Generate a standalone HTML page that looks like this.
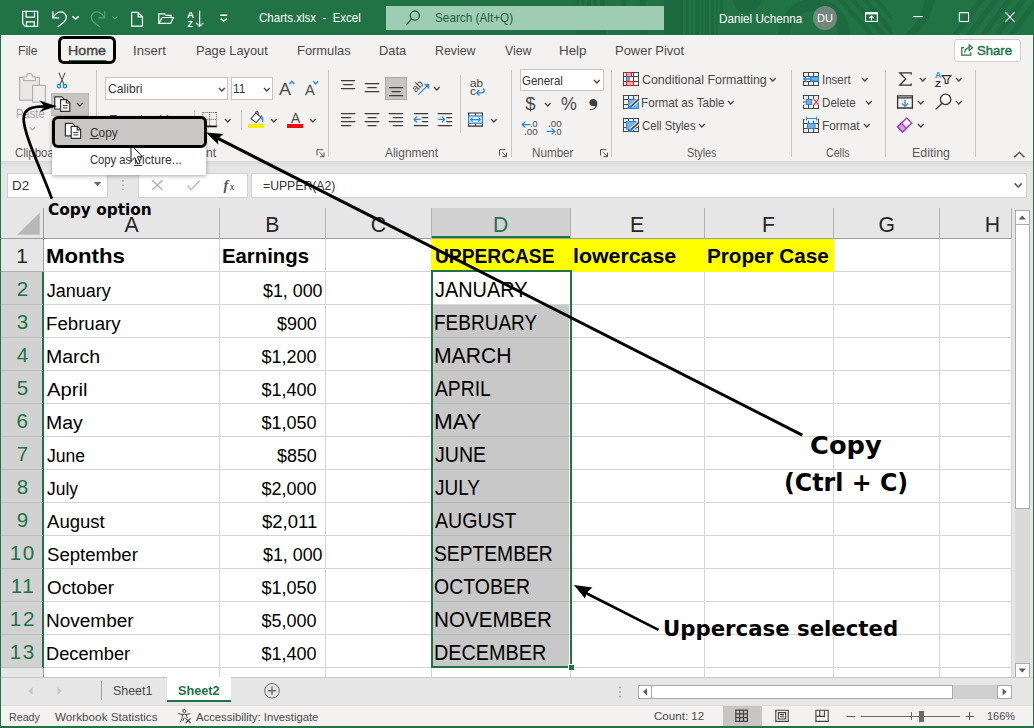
<!DOCTYPE html>
<html lang="en">
<head>
<meta charset="utf-8">
<title>Charts.xlsx - Excel</title>
<style>
html,body{margin:0;padding:0;}
body{width:1034px;height:728px;overflow:hidden;background:#f3f2f1;font-family:"Liberation Sans",sans-serif;}
#app{position:relative;width:1034px;height:728px;overflow:hidden;background:#f3f2f1;}
#app div,#app svg,#app span.t{position:absolute;box-sizing:border-box;}
#app svg{overflow:visible;display:block;}
span.t{white-space:pre;line-height:1;transform-origin:0 0;}
.u{text-decoration:underline;}
</style>
</head>
<body>
<div id="app">
<div id="titlebar" style="left:0px;top:0px;width:1034px;height:34.6px;background:#217346;">
  <svg style="left:0px;top:0px" width="1034" height="34.6" viewBox="0 0 1034 34.6"><g fill="#000" opacity=".075">
<rect x="664" y="0" width="19" height="34.6"/>
<path d="M686 0h3v34.6h-3z M691 0h2v34.6h-2z M695 0h4v34.6h-4z M701 0h2v34.6h-2z M705 0h4v34.6h-4z M711 0h3v34.6h-3z M716 0h2v34.6h-2z M720 0h3v16h-3z"/>
<path d="M576 0h3v6h-3z M582 0h2v6h-2z M587 0h4v6h-4z M594 0h3v6h-3z M600 0h5v6h-5z M622 0h4v6h-4z M640 0h6v6h-6z M576 30h30v4.6h-30z M640 30h8v4.6h-8z"/>
<path d="M733 0 A14 13 0 0 0 761 0 Z"/>
<path d="M778 34.6 A36 36 0 0 1 850 34.6 h-12 A24 24 0 0 0 790 34.6 Z"/>
<path d="M838 0 l6 0 l30 34.6 l-6 0 Z M850 0 l6 0 l30 34.6 l-6 0 Z M862 0 l6 0 l24 28 l0 6.6 l-1 0 Z M874 0 l5 0 l13 15 l0 6 Z"/>
<path d="M905 34.6 A60 60 0 0 0 925 0 h10 A70 70 0 0 1 916 34.6 Z"/>
<path d="M952 34.6 l26 -34.6 l7 0 l-26 34.6 Z M966 34.6 l26 -34.6 l7 0 l-26 34.6 Z M980 34.6 l26 -34.6 l7 0 l-26 34.6 Z M994 34.6 l26 -34.6 l7 0 l-26 34.6 Z M1008 34.6 l26 -34.6 l0 9 l-19 25.6 Z"/>
</g></svg>
  <div class="search" style="left:386px;top:6px;width:278px;height:24px;background:#9ecdb4;"></div>
  <span class="t" style="left:259.42px;top:12.1px;font-size:12.6px;color:#ffffff;transform:scaleX(0.915);">Charts.xlsx  -  Excel</span>
  <span class="t" style="left:435.47px;top:12.1px;font-size:12.6px;color:#1f5f3c;transform:scaleX(0.934);">Search (Alt+Q)</span>
  <span class="t" style="left:718.56px;top:12.6px;font-size:12.6px;color:#ffffff;transform:scaleX(0.929);">Daniel Uchenna</span>
  <div style="left:813px;top:6px;width:24px;height:24px;background:#73867d;border-radius:50%;"></div>
  <span class="t" style="left:816.92px;top:13.2px;font-size:10.5px;color:#ffffff;transform:scaleX(1.052);">DU</span>
  <svg style="left:0px;top:0px" width="1034" height="34.6" viewBox="0 0 1034 34.6"><g transform="translate(0 0)">
<g fill="none" stroke="#fff" stroke-width="1.2" stroke-linejoin="miter">
<path d="M22.6 11.3 H37.6 V26.4 H25.2 L22.6 23.8 Z"/>
<path d="M26 11.3 V17.2 H34.4 V11.3"/>
<path d="M26.4 26.4 V21.8 H34.2 V26.4"/>
<path d="M52.8 11.3 V17.8 H59.2"/>
<path d="M53 17.6 C55.4 12.6 60.6 10.6 64 13 C67 15.2 66.8 19.4 64.2 21.8 L57.6 27"/>
<path d="M72.4 16.4 L75.5 19 L78.6 16.4" stroke-width="1.6"/>
<path d="M131.6 12.4 H138 L142.4 16.8 V26.2 H131.6 Z"/>
<path d="M138 12.4 V16.8 H142.4"/>
<path d="M158.7 23.3 V13.8 H164.6 L166 15.3 H171 V17.4"/>
<path d="M158.7 23.4 L162.2 17.5 H173.4 L170.5 23.4 Z"/>
<path d="M199.6 10.8 V26.4 M196 22.8 L199.6 26.5 L203.2 22.8"/>
<path d="M220 15.3 H227.2 M220.6 18.6 L223.6 21.2 L226.6 18.6" stroke-width="1.4"/>
</g>
<g fill="none" stroke="#5f9c7c" stroke-width="1.2">
<path d="M104.6 11.3 V17.8 H98.2"/>
<path d="M104.4 17.6 C102 12.6 96.8 10.6 93.4 13 C90.4 15.2 90.6 19.4 93.2 21.8 L99.8 27"/>
<path d="M112 16.4 L114.8 18.8 L117.6 16.4"/>
</g>
</g></svg>
  <span class="t" style="left:187.05px;top:10.5px;font-size:8.6px;color:#fff;font-weight:bold;transform:scaleX(1.154);">A</span>
  <span class="t" style="left:187.38px;top:19.7px;font-size:8.6px;color:#fff;font-weight:bold;">Z</span>
  <svg style="left:0px;top:0px" width="1034" height="34.6" viewBox="0 0 1034 34.6"><g transform="translate(0 0)"><g fill="none" stroke="#1f5f3c" stroke-width="1.3"><circle cx="414.8" cy="15.6" r="4.6"/><path d="M411.6 19 L406.4 24.6"/></g></g></svg>
  <svg style="left:0px;top:0px" width="1034" height="34.6" viewBox="0 0 1034 34.6"><g transform="translate(0 0)"><g fill="none" stroke="#fff" stroke-width="1.1">
<rect x="865.6" y="12.6" width="11.8" height="8.8"/><path d="M865.6 13.4 H877.4" stroke-width="2"/>
<path d="M871.5 20.2 V16.2 M869.2 18.2 L871.5 16 L873.8 18.2"/>
<path d="M913.2 16.6 H923"/>
<rect x="959.4" y="12.7" width="9.2" height="8.8"/>
<path d="M1005.3 12.2 L1014.8 21.8 M1014.8 12.2 L1005.3 21.8"/>
</g></g></svg>
</div>
<div id="tabs" style="left:1px;top:35px;width:1032px;height:31px;background:#f3f2f1;">
  <span class="t" style="left:16.63px;top:9.9px;font-size:12.6px;color:#4a4a4a;transform:scaleX(0.959);">File</span>
  <span class="t" style="left:67.47px;top:8.9px;font-size:13.3px;color:#4a4a4a;transform:scaleX(1.067);-webkit-text-stroke:0.4px #444;">Home</span>
  <span class="t" style="left:131.82px;top:9.9px;font-size:12.6px;color:#4a4a4a;transform:scaleX(1.044);">Insert</span>
  <span class="t" style="left:195.38px;top:9.9px;font-size:12.6px;color:#4a4a4a;transform:scaleX(1.014);">Page Layout</span>
  <span class="t" style="left:296.27px;top:9.9px;font-size:12.6px;color:#4a4a4a;transform:scaleX(1.024);">Formulas</span>
  <span class="t" style="left:378.17px;top:9.9px;font-size:12.6px;color:#4a4a4a;transform:scaleX(1.022);">Data</span>
  <span class="t" style="left:434.01px;top:9.9px;font-size:12.6px;color:#4a4a4a;transform:scaleX(0.980);">Review</span>
  <span class="t" style="left:503.5px;top:9.9px;font-size:12.6px;color:#4a4a4a;transform:scaleX(0.978);">View</span>
  <span class="t" style="left:557.53px;top:9.9px;font-size:12.6px;color:#4a4a4a;transform:scaleX(1.062);">Help</span>
  <span class="t" style="left:614.16px;top:9.9px;font-size:12.6px;color:#4a4a4a;transform:scaleX(1.028);">Power Pivot</span>
  <div style="left:68.3px;top:24.6px;width:37.2px;height:2px;background:#217346;"></div>
  <div style="left:952.5px;top:3.7px;width:67.5px;height:23px;background:#fff;border:1px solid #d2d0ce;border-radius:3px;"></div>
  <span class="t" style="left:975.61px;top:8.5px;font-size:13px;color:#217346;transform:scaleX(1.008);-webkit-text-stroke:0.45px #217346;">Share</span>
  <svg style="left:0px;top:0px" width="1032" height="31" viewBox="0 0 1032 31"><g transform="translate(-1 -35)"><g fill="none" stroke="#217346" stroke-width="1.2">
<path d="M964 47.6 H961.8 V55.2 H970.8 V52.2"/>
<path d="M964.6 52.6 C965 49.6 966.8 47.8 969.4 47.7"/>
<path d="M969.2 45 L972.6 47.8 L969.2 50.6 Z"/>
</g></g></svg>
</div>
<div id="ribbon" style="left:1px;top:66px;width:1032px;height:95px;background:#f3f2f1;">
  <div style="left:94.9px;top:3.6px;width:1px;height:87px;background:#c8c6c4;"></div>
  <div style="left:327.2px;top:3.6px;width:1px;height:87px;background:#c8c6c4;"></div>
  <div style="left:509.7px;top:3.6px;width:1px;height:87px;background:#c8c6c4;"></div>
  <div style="left:610.1px;top:3.6px;width:1px;height:87px;background:#c8c6c4;"></div>
  <div style="left:789.8px;top:3.6px;width:1px;height:87px;background:#c8c6c4;"></div>
  <div style="left:884.1px;top:3.6px;width:1px;height:87px;background:#c8c6c4;"></div>
  <div style="left:974px;top:3.6px;width:1px;height:87px;background:#c8c6c4;"></div>
  <div style="left:459.2px;top:9px;width:1px;height:58px;background:#c8c6c4;"></div>
  <div style="left:193px;top:44px;width:1px;height:20px;background:#c8c6c4;"></div>
  <div style="left:239.5px;top:44px;width:1px;height:20px;background:#c8c6c4;"></div>
  <span class="t" style="left:15.1px;top:41.9px;font-size:12.6px;color:#a6a6a6;transform:scaleX(0.890);">Paste</span>
  <span class="t" style="left:13.73px;top:80.8px;font-size:12px;color:#5a5a5a;transform:scaleX(0.953);">Clipboard</span>
  <div style="left:50px;top:27px;width:38px;height:23px;background:#c8c6c4;border:1px solid #b9b7b5;"></div>
  <div style="left:104px;top:11px;width:123px;height:22.5px;background:#fff;border:1px solid #c8c6c4;"></div>
  <div style="left:229.5px;top:11px;width:42px;height:22.5px;background:#fff;border:1px solid #c8c6c4;"></div>
  <span class="t" style="left:106.89px;top:17px;font-size:12.6px;color:#333;transform:scaleX(0.965);">Calibri</span>
  <span class="t" style="left:232.01px;top:17px;font-size:12.6px;color:#333;transform:scaleX(0.937);">11</span>
  <span class="t" style="left:278px;top:15px;font-size:17px;color:#4a4a4a;transform:scaleX(1.061);">A</span>
  <span class="t" style="left:303.7px;top:17px;font-size:14px;color:#4a4a4a;transform:scaleX(1.053);">A</span>
  <span class="t" style="left:108.05px;top:47px;font-size:14px;color:#4a4a4a;font-weight:bold;transform:scaleX(1.045);">B</span>
  <span class="t" style="left:137.51px;top:47px;font-size:14px;color:#4a4a4a;font-style:italic;">I</span>
  <span class="t" style="left:157.95px;top:47px;font-size:14px;color:#4a4a4a;text-decoration:underline;">U</span>
  <span class="t" style="left:190.53px;top:80.8px;font-size:12px;color:#5a5a5a;transform:scaleX(1.007);">Font</span>
  <span class="t" style="left:289.5px;top:44.5px;font-size:14.6px;color:#4a4a4a;transform:scaleX(0.948);">A</span>
  <div style="left:247px;top:57.9px;width:16px;height:4.1px;background:#ffee00;"></div>
  <div style="left:286px;top:57.9px;width:16px;height:4.1px;background:#f00a0a;"></div>
  <div style="left:384.3px;top:11px;width:22px;height:23px;background:#c8c6c4;border:1px solid #a9a7a5;"></div>
  <span class="t" style="left:384px;top:80.8px;font-size:12px;color:#5a5a5a;transform:scaleX(0.994);">Alignment</span>
  <div style="left:518.5px;top:3.3px;width:84.5px;height:22.2px;background:#fff;border:1px solid #c8c6c4;"></div>
  <span class="t" style="left:520.83px;top:8.7px;font-size:12.6px;color:#333;transform:scaleX(0.912);">General</span>
  <span class="t" style="left:524.32px;top:29.2px;font-size:18.5px;color:#4a4a4a;">$</span>
  <span class="t" style="left:559.98px;top:30.4px;font-size:17.6px;color:#4a4a4a;transform:scaleX(1.012);">%</span>
  <span class="t" style="left:587.49px;top:15.2px;font-size:27px;color:#3f3f3f;font-family:'DejaVu Sans', 'Liberation Sans', sans-serif;">❟</span>
  <span class="t" style="left:530.57px;top:80.8px;font-size:12px;color:#5a5a5a;transform:scaleX(0.972);">Number</span>
  <span class="t" style="left:640.78px;top:8.2px;font-size:12.6px;color:#4a4a4a;transform:scaleX(0.984);">Conditional Formatting</span>
  <span class="t" style="left:640.46px;top:30.8px;font-size:12.6px;color:#4a4a4a;transform:scaleX(0.928);">Format as Table</span>
  <span class="t" style="left:640.83px;top:53.7px;font-size:12.6px;color:#4a4a4a;transform:scaleX(0.901);">Cell Styles</span>
  <span class="t" style="left:685.81px;top:80.8px;font-size:12px;color:#5a5a5a;transform:scaleX(0.904);">Styles</span>
  <span class="t" style="left:820.87px;top:8px;font-size:12.6px;color:#4a4a4a;transform:scaleX(0.912);">Insert</span>
  <span class="t" style="left:820.97px;top:30.6px;font-size:12.6px;color:#4a4a4a;transform:scaleX(0.923);">Delete</span>
  <span class="t" style="left:820.95px;top:53.7px;font-size:12.6px;color:#4a4a4a;transform:scaleX(0.944);">Format</span>
  <span class="t" style="left:825.17px;top:80.8px;font-size:12px;color:#5a5a5a;transform:scaleX(0.888);">Cells</span>
  <span class="t" style="left:910.61px;top:80.8px;font-size:12px;color:#5a5a5a;transform:scaleX(1.035);">Editing</span>
  <svg style="left:0px;top:0px" width="1032" height="95" viewBox="0 0 1032 95"><g transform="translate(-1 -66)">
<g stroke="#b4b2b0" stroke-width="1.2" fill="#e9e8e7">
<path d="M19.6 77.4 H39.4 V100.2 H19.6 Z"/>
<path d="M23.8 80.6 V77 H26.6 C26.8 74.2 28.2 73.4 29.6 73.4 C31 73.4 32.4 74.2 32.6 77 H35.4 V80.6 Z" fill="#f3f2f1"/>
<path d="M32.6 85.4 H45.4 V102.2 H32.6 Z" fill="#efeeed"/>
</g>
<path d="M29.8 127.3 L32.4 129.8 L35 127.3" fill="none" stroke="#b4b2b0" stroke-width="1.2"/>
<g fill="none" stroke="#555" stroke-width="1.1"><path d="M58.9 72.6 L64.2 85 M65.1 72.6 L59.8 85"/></g>
<g fill="none" stroke="#1e8ad6" stroke-width="1.3"><circle cx="59" cy="86.2" r="1.7"/><circle cx="65" cy="86.2" r="1.7"/></g>
<g stroke="#333" stroke-width="1.2" fill="#fff">
<path d="M54.8 96.8 H61.8 L64 99 V109 H54.8 Z"/>
<path d="M60.6 99.6 H66.6 L69.8 102.8 V111.4 H60.6 Z"/>
<path d="M66.4 99.8 V103 H69.6" fill="none"/>
<path d="M62.8 105.6 H67.6 M62.8 108 H67.6" fill="none" stroke-width="1"/>
</g></g></svg>
  <svg style="left:74.8px;top:36.2px" width="7.7" height="5" viewBox="0 0 7.7 5"><path d="M1 1 L3.85 4 L6.7 1" fill="none" stroke="#444444" stroke-width="1.3"/></svg>
  <svg style="left:216.8px;top:21px" width="7.7" height="5" viewBox="0 0 7.7 5"><path d="M1 1 L3.85 4 L6.7 1" fill="none" stroke="#444444" stroke-width="1.3"/></svg>
  <svg style="left:261.6px;top:21px" width="7.7" height="5" viewBox="0 0 7.7 5"><path d="M1 1 L3.85 4 L6.7 1" fill="none" stroke="#444444" stroke-width="1.3"/></svg>
  <svg style="left:0px;top:0px" width="1032" height="95" viewBox="0 0 1032 95"><g transform="translate(-1 -66)"><g fill="none" stroke="#2b88d8" stroke-width="1.4"><path d="M289.4 84 L291.8 81.3 L294.2 84"/><path d="M313.3 81.3 L315.7 84 L318.1 81.3"/></g></g></svg>
  <svg style="left:0px;top:0px" width="1032" height="95" viewBox="0 0 1032 95"><g transform="translate(-1 -66)"><g fill="none" stroke="#555" stroke-width="1" stroke-dasharray="1 1.05">
<path d="M202.6 112.5 H216.6 M202.6 119.4 H216.6 M202.8 112.2 V126 M209.6 112.2 V126 M216.4 112.2 V126"/></g>
<path d="M202 126.4 H217" stroke="#111" stroke-width="1.7"/></g></svg>
  <svg style="left:222.8px;top:52px" width="7.7" height="5" viewBox="0 0 7.7 5"><path d="M1 1 L3.85 4 L6.7 1" fill="none" stroke="#444444" stroke-width="1.3"/></svg>
  <svg style="left:0px;top:0px" width="1032" height="95" viewBox="0 0 1032 95"><g transform="translate(-1 -66)"><g fill="none" stroke="#444" stroke-width="1.1">
<path d="M255.8 113 L251 118.6 L256.2 122.6 L261 117 Z" fill="#fbfbfb"/>
<path d="M255.8 113 C255.4 111.4 257.6 110.6 258.2 112.6 L258.4 115.2"/>
</g>
<path d="M261.4 115.4 C263.2 117.4 263.4 119.6 262.6 121.8 C261.8 120 261.6 118 261.4 115.4 Z" fill="#2b88d8" stroke="#2b88d8" stroke-width=".8"/></g></svg>
  <svg style="left:268.5px;top:52px" width="7.7" height="5" viewBox="0 0 7.7 5"><path d="M1 1 L3.85 4 L6.7 1" fill="none" stroke="#444444" stroke-width="1.3"/></svg>
  <svg style="left:307.7px;top:52px" width="7.7" height="5" viewBox="0 0 7.7 5"><path d="M1 1 L3.85 4 L6.7 1" fill="none" stroke="#444444" stroke-width="1.3"/></svg>
  <svg style="left:0px;top:0px" width="1032" height="95" viewBox="0 0 1032 95"><g transform="translate(-1 -66)"><g fill="none" stroke="#555" stroke-width="1"><path d="M317 155.6 V149.7 H322.9"/><path d="M319.7 152.4 L323.9 156.6 M324 152.6 V156.7 H319.9"/></g></g></svg>
  <svg style="left:0px;top:0px" width="1032" height="95" viewBox="0 0 1032 95"><g transform="translate(-1 -66)"><g fill="none" stroke="#555" stroke-width="1"><path d="M499.5 155.6 V149.7 H505.4"/><path d="M502.2 152.4 L506.4 156.6 M506.5 152.6 V156.7 H502.4"/></g></g></svg>
  <svg style="left:0px;top:0px" width="1032" height="95" viewBox="0 0 1032 95"><g transform="translate(-1 -66)"><g fill="none" stroke="#555" stroke-width="1"><path d="M600.5 155.6 V149.7 H606.4"/><path d="M603.2 152.4 L607.4 156.6 M607.5 152.6 V156.7 H603.4"/></g></g></svg>
  <svg style="left:0px;top:0px" width="1032" height="95" viewBox="0 0 1032 95"><g transform="translate(-1 -66)"><path d="M341 80.5 H355 M343.2 84.5 H352.8 M341 88.5 H355" fill="none" stroke="#3b3b3b" stroke-width="1.25"/></g></svg>
  <svg style="left:0px;top:0px" width="1032" height="95" viewBox="0 0 1032 95"><g transform="translate(-1 -66)"><path d="M365 83.5 H379 M367.3 87.5 H376.8 M365 91.5 H379" fill="none" stroke="#3b3b3b" stroke-width="1.25"/></g></svg>
  <svg style="left:0px;top:0px" width="1032" height="95" viewBox="0 0 1032 95"><g transform="translate(-1 -66)"><path d="M389 87.5 H403.2 M391.5 91.5 H400.8 M389 95.5 H403.2" fill="none" stroke="#3b3b3b" stroke-width="1.25"/></g></svg>
  <svg style="left:0px;top:0px" width="1032" height="95" viewBox="0 0 1032 95"><g transform="translate(-1 -66)"><path d="M341 113.5 H355 M341 117.5 H350.8 M341 121.5 H355 M341 125.5 H350.8" fill="none" stroke="#3b3b3b" stroke-width="1.25"/></g></svg>
  <svg style="left:0px;top:0px" width="1032" height="95" viewBox="0 0 1032 95"><g transform="translate(-1 -66)"><path d="M365 113.5 H379 M367.5 117.5 H376.5 M365 121.5 H379 M367.5 125.5 H376.5" fill="none" stroke="#3b3b3b" stroke-width="1.25"/></g></svg>
  <svg style="left:0px;top:0px" width="1032" height="95" viewBox="0 0 1032 95"><g transform="translate(-1 -66)"><path d="M389 113.5 H403.2 M393.2 117.5 H403.2 M389 121.5 H403.2 M393.2 125.5 H403.2" fill="none" stroke="#3b3b3b" stroke-width="1.25"/></g></svg>
  <svg style="left:0px;top:0px" width="1032" height="95" viewBox="0 0 1032 95"><g transform="translate(-1 -66)"><path d="M413.8 113.5 H428 M422.2 117.5 H428 M422.2 121.5 H428 M413.8 125.5 H428" fill="none" stroke="#3b3b3b" stroke-width="1.25"/></g></svg>
  <svg style="left:0px;top:0px" width="1032" height="95" viewBox="0 0 1032 95"><g transform="translate(-1 -66)"><path d="M438 113.5 H452.2 M446.4 117.5 H452.2 M446.4 121.5 H452.2 M438 125.5 H452.2" fill="none" stroke="#3b3b3b" stroke-width="1.25"/></g></svg>
  <svg style="left:0px;top:0px" width="1032" height="95" viewBox="0 0 1032 95"><g transform="translate(-1 -66)"><g fill="none" stroke="#2b88d8" stroke-width="1.3">
<path d="M420.6 119.4 H414.4 M417 116.6 L414.2 119.4 L417 122.2"/>
<path d="M438.2 119.4 H444.4 M441.8 116.6 L444.6 119.4 L441.8 122.2"/>
<path d="M418.4 94.6 L428.6 84.6"/><path d="M424.6 84.3 H428.9 V88.4 Z" fill="#2b88d8" stroke-width=".8"/>
</g></g></svg>
  <span class="t" style="left:-6.77px;top:-71.66px;font-size:10.4px;color:#444444;transform:rotate(-45deg);transform-origin:0 0;left:408.8px;top:20.8px;">ab</span>
  <svg style="left:431.7px;top:20px" width="7.7" height="5" viewBox="0 0 7.7 5"><path d="M1 1 L3.85 4 L6.7 1" fill="none" stroke="#444444" stroke-width="1.3"/></svg>
  <span class="t" style="left:468.93px;top:12.3px;font-size:10.5px;color:#444444;transform:scaleX(1.110);">ab</span>
  <span class="t" style="left:468.92px;top:19.8px;font-size:10.5px;color:#444444;transform:scaleX(1.138);">c</span>
  <svg style="left:0px;top:0px" width="1032" height="95" viewBox="0 0 1032 95"><g transform="translate(-1 -66)"><g fill="none" stroke="#2b88d8" stroke-width="1.3"><path d="M483 88.6 C485.2 90.2 484.4 92.8 481.6 92.8 H476.8 M479.4 90.2 L476.6 92.8 L479.4 95.4"/></g></g></svg>
  <svg style="left:0px;top:0px" width="1032" height="95" viewBox="0 0 1032 95"><g transform="translate(-1 -66)"><g fill="none" stroke="#333" stroke-width="1.2">
<path d="M468.6 116 V113 H482.4 V116 M468.6 123.2 V126.2 H482.4 V123.2 M475.5 113 V116 M475.5 123.2 V126.2"/></g>
<rect x="468.6" y="116" width="13.8" height="7.2" fill="#e1effa" stroke="#2b88d8" stroke-width="1.2"/>
<path d="M470.6 119.6 H480.4 M472.6 117.6 L470.6 119.6 L472.6 121.6 M478.4 117.6 L480.4 119.6 L478.4 121.6" fill="none" stroke="#2b88d8" stroke-width="1.1"/></g></svg>
  <svg style="left:488.5px;top:51.8px" width="7.7" height="5" viewBox="0 0 7.7 5"><path d="M1 1 L3.85 4 L6.7 1" fill="none" stroke="#444444" stroke-width="1.3"/></svg>
  <svg style="left:592.4px;top:12.8px" width="7.7" height="5" viewBox="0 0 7.7 5"><path d="M1 1 L3.85 4 L6.7 1" fill="none" stroke="#444444" stroke-width="1.3"/></svg>
  <svg style="left:542.8px;top:35.7px" width="7.7" height="5" viewBox="0 0 7.7 5"><path d="M1 1 L3.85 4 L6.7 1" fill="none" stroke="#444444" stroke-width="1.3"/></svg>
  <svg style="left:0px;top:0px" width="1032" height="95" viewBox="0 0 1032 95"><g transform="translate(-1 -66)"><g fill="none" stroke="#2b88d8" stroke-width="1.3">
<path d="M530.4 124.6 H522.4 M525.4 121.6 L522.2 124.6 L525.4 127.6"/>
<path d="M546.6 131.4 H554.6 M551.6 128.4 L554.8 131.4 L551.6 134.4"/>
</g></g></svg>
  <span class="t" style="left:528.79px;top:53.2px;font-size:9.5px;color:#444444;transform:scaleX(0.949);">.0</span>
  <span class="t" style="left:522.72px;top:60.8px;font-size:9.5px;color:#444444;transform:scaleX(1.032);">.00</span>
  <span class="t" style="left:546.72px;top:53.2px;font-size:9.5px;color:#444444;transform:scaleX(1.032);">.00</span>
  <span class="t" style="left:552.79px;top:60.8px;font-size:9.5px;color:#444444;transform:scaleX(0.949);">.0</span>
  <svg style="left:0px;top:0px" width="1032" height="95" viewBox="0 0 1032 95"><g transform="translate(-1 -66)"><path d="M623.5 72 V86 M628.5 72 V86 M633.5 72 V86 M638.5 72 V86 M623 72.5 H639 M623 76.5 H639 M623 81.5 H639 M623 85.5 H639" fill="none" stroke="#454545" stroke-width="1"/><rect x="626.5" y="72.5" width="5" height="4" fill="#f7a6ae" stroke="#e3202c" stroke-width="1"/><rect x="626.5" y="77" width="2.6" height="4" fill="#6fb1ea" stroke="#2b88d8" stroke-width="1"/><rect x="626.5" y="81.5" width="7" height="4" fill="#f7a6ae" stroke="#e3202c" stroke-width="1"/></g></svg>
  <svg style="left:0px;top:0px" width="1032" height="95" viewBox="0 0 1032 95"><g transform="translate(-1 -66)"><path d="M623.5 95 V109 M628.5 95 V109 M633.5 95 V109 M638.5 95 V109 M623 95.5 H639 M623 99.5 H639 M623 104.5 H639 M623 108.5 H639" fill="none" stroke="#454545" stroke-width="1"/><rect x="628.5" y="99.5" width="10" height="9" fill="#6fb1ea" stroke="#2b88d8" stroke-width="1"/><path d="M638.8 99.4 l-8.6 7.6" stroke="#f3f2f1" stroke-width="3.6"/><path d="M639 99.2 l-7.8 6.9" stroke="#444" stroke-width="1.7"/><path d="M631.4 105 c-1.8 0 -2.6 2.6 -5.2 3.4 c2.6 1 6 .4 6.4 -2 Z" fill="#2b88d8"/></g></svg>
  <svg style="left:0px;top:0px" width="1032" height="95" viewBox="0 0 1032 95"><g transform="translate(-1 -66)"><path d="M623.5 118 V132 M628.5 118 V132 M633.5 118 V132 M638.5 118 V132 M623 118.5 H639 M623 122.5 H639 M623 127.5 H639 M623 131.5 H639" fill="none" stroke="#454545" stroke-width="1"/><rect x="626.5" y="121.5" width="9.5" height="7.5" fill="#6fb1ea" stroke="#2b88d8" stroke-width="1"/><path d="M638.8 122.6 l-8.6 7.6" stroke="#f3f2f1" stroke-width="3.6"/><path d="M639 122.4 l-7.8 6.9" stroke="#444" stroke-width="1.7"/><path d="M631.4 128.2 c-1.8 0 -2.6 2.6 -5.2 3.4 c2.6 1 6 .4 6.4 -2 Z" fill="#2b88d8"/></g></svg>
  <svg style="left:767.6px;top:11.2px" width="7.7" height="5" viewBox="0 0 7.7 5"><path d="M1 1 L3.85 4 L6.7 1" fill="none" stroke="#444444" stroke-width="1.3"/></svg>
  <svg style="left:726.4px;top:33.8px" width="7.7" height="5" viewBox="0 0 7.7 5"><path d="M1 1 L3.85 4 L6.7 1" fill="none" stroke="#444444" stroke-width="1.3"/></svg>
  <svg style="left:696.6px;top:56.8px" width="7.7" height="5" viewBox="0 0 7.7 5"><path d="M1 1 L3.85 4 L6.7 1" fill="none" stroke="#444444" stroke-width="1.3"/></svg>
  <svg style="left:0px;top:0px" width="1032" height="95" viewBox="0 0 1032 95"><g transform="translate(-1 -66)"><path d="M803.5 72 V86 M808.5 72 V86 M813.5 72 V86 M818.5 72 V86 M803 72.5 H819 M803 76.5 H819 M803 81.5 H819 M803 85.5 H819" fill="none" stroke="#454545" stroke-width="1"/><rect x="802" y="77.2" width="8" height="3.8" fill="#f3f2f1"/><rect x="810.5" y="77" width="8" height="4" fill="#6fb1ea" stroke="#2b88d8" stroke-width="1"/><path d="M812 79 H803.8 M806.6 76.2 L803.6 79 L806.6 81.8" fill="none" stroke="#2b88d8" stroke-width="1.3"/></g></svg>
  <svg style="left:0px;top:0px" width="1032" height="95" viewBox="0 0 1032 95"><g transform="translate(-1 -66)"><path d="M803.5 95 V109 M808.5 95 V109 M813.5 95 V109 M818.5 95 V109 M803 95.5 H819 M803 99.5 H819 M803 104.5 H819 M803 108.5 H819" fill="none" stroke="#454545" stroke-width="1"/><rect x="802" y="99.2" width="18" height="5.6" fill="#f3f2f1"/><rect x="806.5" y="99.5" width="5" height="5" fill="#6fb1ea" stroke="#2b88d8" stroke-width="1"/><path d="M803 102 H806" stroke="#454545" stroke-width="1"/><path d="M813.8 99.4 L818.8 104.6 M818.8 99.4 L813.8 104.6" fill="none" stroke="#e8333a" stroke-width="1.2"/></g></svg>
  <svg style="left:0px;top:0px" width="1032" height="95" viewBox="0 0 1032 95"><g transform="translate(-1 -66)"><path d="M803.5 119 V133 M808.5 119 V133 M813.5 119 V133 M818.5 119 V133 M803 119.5 H819 M803 123.5 H819 M803 128.5 H819 M803 132.5 H819" fill="none" stroke="#454545" stroke-width="1"/><rect x="804.6" y="117" width="13" height="3.8" fill="#f3f2f1"/><path d="M806.5 118.5 H816.5 M806.5 116.6 V120.4 M816.5 116.6 V120.4" fill="none" stroke="#2b88d8" stroke-width="1"/><rect x="807.5" y="123.5" width="7.5" height="5" fill="#6fb1ea" stroke="#2b88d8" stroke-width="1"/></g></svg>
  <svg style="left:859.8px;top:11px" width="7.7" height="5" viewBox="0 0 7.7 5"><path d="M1 1 L3.85 4 L6.7 1" fill="none" stroke="#444444" stroke-width="1.3"/></svg>
  <svg style="left:863.6px;top:33.8px" width="7.7" height="5" viewBox="0 0 7.7 5"><path d="M1 1 L3.85 4 L6.7 1" fill="none" stroke="#444444" stroke-width="1.3"/></svg>
  <svg style="left:862.4px;top:56.8px" width="7.7" height="5" viewBox="0 0 7.7 5"><path d="M1 1 L3.85 4 L6.7 1" fill="none" stroke="#444444" stroke-width="1.3"/></svg>
  <svg style="left:0px;top:0px" width="1032" height="95" viewBox="0 0 1032 95"><g transform="translate(-1 -66)"><g fill="none" stroke="#333" stroke-width="1.3">
<path d="M911.2 74.6 V72.8 H899.8 L905.8 79 L899.8 85.2 H911.2 V83.4"/>
<path d="M942.2 75.6 H951 L948 79.6 V83.4 H945.2 V79.6 Z" stroke-width="1.1"/>
<path d="M897.6 95.8 H912.4 V108 H897.6 Z M897.6 97.8 H912.4"/>
<circle cx="945.6" cy="99.4" r="5.2" fill="#fbfbfb"/><path d="M942 103.2 L935.8 109.4"/>
</g>
<path d="M905 99.8 V106.2 M902 103.4 L905 106.4 L908 103.4" fill="none" stroke="#2b88d8" stroke-width="1.3"/>
<path d="M906.8 118 L911.8 123.2 L902.4 132 L897.6 126.8 Z" fill="#fbfbfb" stroke="#a43ab7" stroke-width="1.3"/>
<path d="M901.4 123.2 L906.4 128.2 L902.4 132 L897.6 126.8 Z" fill="#d9a0e3" stroke="#a43ab7" stroke-width="1.3"/></g></svg>
  <span class="t" style="left:933.89px;top:4.6px;font-size:8.6px;color:#2b88d8;font-weight:bold;">A</span>
  <span class="t" style="left:934.06px;top:13.6px;font-size:8.6px;color:#333;font-weight:bold;transform:scaleX(1.121);">Z</span>
  <svg style="left:917.7px;top:11px" width="7.7" height="5" viewBox="0 0 7.7 5"><path d="M1 1 L3.85 4 L6.7 1" fill="none" stroke="#444444" stroke-width="1.3"/></svg>
  <svg style="left:953.8px;top:11px" width="7.7" height="5" viewBox="0 0 7.7 5"><path d="M1 1 L3.85 4 L6.7 1" fill="none" stroke="#444444" stroke-width="1.3"/></svg>
  <svg style="left:915.6px;top:34.1px" width="7.7" height="5" viewBox="0 0 7.7 5"><path d="M1 1 L3.85 4 L6.7 1" fill="none" stroke="#444444" stroke-width="1.3"/></svg>
  <svg style="left:953.8px;top:34.1px" width="7.7" height="5" viewBox="0 0 7.7 5"><path d="M1 1 L3.85 4 L6.7 1" fill="none" stroke="#444444" stroke-width="1.3"/></svg>
  <svg style="left:915.6px;top:57.2px" width="7.7" height="5" viewBox="0 0 7.7 5"><path d="M1 1 L3.85 4 L6.7 1" fill="none" stroke="#444444" stroke-width="1.3"/></svg>
  <svg style="left:0px;top:0px" width="1032" height="95" viewBox="0 0 1032 95"><g transform="translate(-1 -66)"><path d="M1014.4 157.2 L1019.4 152.4 L1024.4 157.2" fill="none" stroke="#444" stroke-width="1.3"/></g></svg>
</div>
<div id="ribshadow" style="left:1px;top:161px;width:1032px;height:6px;background:linear-gradient(#d9d9d9,#e6e6e6);">
</div>
<div id="formulabar" style="left:1px;top:167px;width:1032px;height:41px;background:#e6e6e6;">
  <div style="left:5.5px;top:5.5px;width:101px;height:25px;background:#fff;border:1px solid #d0d0d0;"></div>
  <div style="left:137px;top:5.5px;width:109.5px;height:25px;background:#fff;border:1px solid #d0d0d0;"></div>
  <div style="left:250px;top:5.5px;width:776px;height:25px;background:#fff;border:1px solid #d0d0d0;"></div>
  <span class="t" style="left:11.33px;top:12.8px;font-size:12.6px;color:#333;transform:scaleX(1.063);">D2</span>
  <span class="t" style="left:262.45px;top:12.8px;font-size:12.6px;color:#333;transform:scaleX(0.970);">=UPPER(A2)</span>
  <svg style="left:0px;top:0px" width="1032" height="41" viewBox="0 0 1032 41"><g transform="translate(-1 -167)"><path d="M93.9 182 H101.3 L97.6 186.2 Z" fill="#6a6a6a"/>
<g fill="#a8a8a8"><circle cx="123" cy="180.8" r=".9"/><circle cx="123" cy="185.1" r=".9"/><circle cx="123" cy="189.4" r=".9"/></g>
<path d="M152.2 180.4 L162.4 189.8 M162.4 180.4 L152.2 189.8" fill="none" stroke="#b4b4b4" stroke-width="1.5"/>
<path d="M187.4 185.6 L191.2 189.6 L199.8 180.6" fill="none" stroke="#c6c6c6" stroke-width="1.8"/>
<path d="M1014.6 183.4 L1018.2 187 L1021.8 183.4" fill="none" stroke="#555" stroke-width="1.5"/></g></svg>
  <span class="t" style="left:222.49px;top:10.6px;font-size:14.5px;color:#555;font-family:'Liberation Serif', serif;font-weight:bold;font-style:italic;">f</span>
  <span class="t" style="left:228.78px;top:15.8px;font-size:9.5px;color:#555;font-family:'Liberation Serif', serif;font-weight:bold;font-style:italic;transform:scaleX(0.895);">x</span>
</div>
<div id="grid" style="left:1px;top:208px;width:1032px;height:469px;background:#fff;overflow:hidden;">
  <div style="left:0px;top:0px;width:1011px;height:30px;background:#e6e6e6;"></div>
  <div style="left:0px;top:30px;width:1011px;height:1px;background:#9f9f9f;"></div>
  <div style="left:0px;top:31px;width:42px;height:438px;background:#e6e6e6;"></div>
  <div style="left:42px;top:0px;width:1px;height:469px;background:#9f9f9f;"></div>
  <div style="left:1011px;top:0px;width:20.5px;height:469px;background:#e6e6e6;"></div>
  <div style="left:218px;top:0px;width:1px;height:30px;background:#b1b1b1;"></div>
  <div style="left:324px;top:0px;width:1px;height:30px;background:#b1b1b1;"></div>
  <div style="left:430px;top:0px;width:1px;height:30px;background:#b1b1b1;"></div>
  <div style="left:569px;top:0px;width:1px;height:30px;background:#b1b1b1;"></div>
  <div style="left:703px;top:0px;width:1px;height:30px;background:#b1b1b1;"></div>
  <div style="left:832px;top:0px;width:1px;height:30px;background:#b1b1b1;"></div>
  <div style="left:938px;top:0px;width:1px;height:30px;background:#b1b1b1;"></div>
  <div style="left:1010px;top:0px;width:1px;height:30px;background:#b1b1b1;"></div>
  <div style="left:431px;top:0px;width:138px;height:30px;background:#d2d2d2;border-bottom:2px solid #217346;"></div>
  <div style="left:0px;top:64px;width:43px;height:396px;background:#d2d2d2;border-right:2px solid #217346;"></div>
  <div style="left:218px;top:31px;width:1px;height:438px;background:#d4d4d4;"></div>
  <div style="left:324px;top:31px;width:1px;height:438px;background:#d4d4d4;"></div>
  <div style="left:430px;top:31px;width:1px;height:438px;background:#d4d4d4;"></div>
  <div style="left:569px;top:31px;width:1px;height:438px;background:#d4d4d4;"></div>
  <div style="left:703px;top:31px;width:1px;height:438px;background:#d4d4d4;"></div>
  <div style="left:832px;top:31px;width:1px;height:438px;background:#d4d4d4;"></div>
  <div style="left:938px;top:31px;width:1px;height:438px;background:#d4d4d4;"></div>
  <div style="left:1010px;top:31px;width:1px;height:438px;background:#d4d4d4;"></div>
  <div style="left:43px;top:63px;width:968px;height:1px;background:#d4d4d4;"></div>
  <div style="left:0px;top:63px;width:42px;height:1px;background:#b1b1b1;"></div>
  <div style="left:43px;top:96px;width:968px;height:1px;background:#d4d4d4;"></div>
  <div style="left:0px;top:96px;width:42px;height:1px;background:#bdbdbd;"></div>
  <div style="left:43px;top:129px;width:968px;height:1px;background:#d4d4d4;"></div>
  <div style="left:0px;top:129px;width:42px;height:1px;background:#bdbdbd;"></div>
  <div style="left:43px;top:162px;width:968px;height:1px;background:#d4d4d4;"></div>
  <div style="left:0px;top:162px;width:42px;height:1px;background:#bdbdbd;"></div>
  <div style="left:43px;top:195px;width:968px;height:1px;background:#d4d4d4;"></div>
  <div style="left:0px;top:195px;width:42px;height:1px;background:#bdbdbd;"></div>
  <div style="left:43px;top:228px;width:968px;height:1px;background:#d4d4d4;"></div>
  <div style="left:0px;top:228px;width:42px;height:1px;background:#bdbdbd;"></div>
  <div style="left:43px;top:261px;width:968px;height:1px;background:#d4d4d4;"></div>
  <div style="left:0px;top:261px;width:42px;height:1px;background:#bdbdbd;"></div>
  <div style="left:43px;top:294px;width:968px;height:1px;background:#d4d4d4;"></div>
  <div style="left:0px;top:294px;width:42px;height:1px;background:#bdbdbd;"></div>
  <div style="left:43px;top:327px;width:968px;height:1px;background:#d4d4d4;"></div>
  <div style="left:0px;top:327px;width:42px;height:1px;background:#bdbdbd;"></div>
  <div style="left:43px;top:360px;width:968px;height:1px;background:#d4d4d4;"></div>
  <div style="left:0px;top:360px;width:42px;height:1px;background:#bdbdbd;"></div>
  <div style="left:43px;top:393px;width:968px;height:1px;background:#d4d4d4;"></div>
  <div style="left:0px;top:393px;width:42px;height:1px;background:#bdbdbd;"></div>
  <div style="left:43px;top:426px;width:968px;height:1px;background:#d4d4d4;"></div>
  <div style="left:0px;top:426px;width:42px;height:1px;background:#bdbdbd;"></div>
  <div style="left:43px;top:459px;width:968px;height:1px;background:#d4d4d4;"></div>
  <div style="left:0px;top:459px;width:42px;height:1px;background:#bdbdbd;"></div>
  <div style="left:43px;top:492px;width:968px;height:1px;background:#d4d4d4;"></div>
  <div style="left:0px;top:492px;width:42px;height:1px;background:#b1b1b1;"></div>
  <div style="left:430px;top:31px;width:403px;height:33px;background:#ffff00;"></div>
  <div style="left:432px;top:97px;width:136px;height:361.5px;background:#c8c8c8;"></div>
  <div style="left:432px;top:129px;width:136px;height:1px;background:#b6b6b6;"></div>
  <div style="left:432px;top:162px;width:136px;height:1px;background:#b6b6b6;"></div>
  <div style="left:432px;top:195px;width:136px;height:1px;background:#b6b6b6;"></div>
  <div style="left:432px;top:228px;width:136px;height:1px;background:#b6b6b6;"></div>
  <div style="left:432px;top:261px;width:136px;height:1px;background:#b6b6b6;"></div>
  <div style="left:432px;top:294px;width:136px;height:1px;background:#b6b6b6;"></div>
  <div style="left:432px;top:327px;width:136px;height:1px;background:#b6b6b6;"></div>
  <div style="left:432px;top:360px;width:136px;height:1px;background:#b6b6b6;"></div>
  <div style="left:432px;top:393px;width:136px;height:1px;background:#b6b6b6;"></div>
  <div style="left:432px;top:426px;width:136px;height:1px;background:#b6b6b6;"></div>
  <div style="left:429.5px;top:62px;width:141.5px;height:398px;border:2px solid #217346;"></div>
  <div style="left:566.5px;top:455.5px;width:7px;height:7px;background:#217346;border:1px solid #fff;"></div>
  <span class="t" style="left:123.45px;top:6.4px;font-size:21.2px;color:#262626;">A</span>
  <span class="t" style="left:264.13px;top:6.4px;font-size:21.2px;color:#262626;">B</span>
  <span class="t" style="left:369.71px;top:6.4px;font-size:21.2px;color:#262626;">C</span>
  <span class="t" style="left:492px;top:6.4px;font-size:21.2px;color:#217346;">D</span>
  <span class="t" style="left:629.03px;top:6.4px;font-size:21.2px;color:#262626;">E</span>
  <span class="t" style="left:761.06px;top:6.4px;font-size:21.2px;color:#262626;">F</span>
  <span class="t" style="left:877.5px;top:6.4px;font-size:21.2px;color:#262626;">G</span>
  <span class="t" style="left:983.81px;top:6.4px;font-size:21.2px;color:#262626;">H</span>
  <span class="t" style="left:15.37px;top:38.2px;font-size:20.6px;color:#262626;letter-spacing:1.6px;">1</span>
  <span class="t" style="left:15.63px;top:71.2px;font-size:20.6px;color:#217346;letter-spacing:1.6px;">2</span>
  <span class="t" style="left:15.73px;top:104.2px;font-size:20.6px;color:#217346;letter-spacing:1.6px;">3</span>
  <span class="t" style="left:15.73px;top:137.2px;font-size:20.6px;color:#217346;letter-spacing:1.6px;">4</span>
  <span class="t" style="left:15.68px;top:170.2px;font-size:20.6px;color:#217346;letter-spacing:1.6px;">5</span>
  <span class="t" style="left:15.58px;top:203.2px;font-size:20.6px;color:#217346;letter-spacing:1.6px;">6</span>
  <span class="t" style="left:15.63px;top:236.2px;font-size:20.6px;color:#217346;letter-spacing:1.6px;">7</span>
  <span class="t" style="left:15.68px;top:269.2px;font-size:20.6px;color:#217346;letter-spacing:1.6px;">8</span>
  <span class="t" style="left:15.68px;top:302.2px;font-size:20.6px;color:#217346;letter-spacing:1.6px;">9</span>
  <span class="t" style="left:8.75px;top:335.2px;font-size:20.6px;color:#217346;letter-spacing:1.6px;">10</span>
  <span class="t" style="left:9.63px;top:368.2px;font-size:20.6px;color:#217346;letter-spacing:1.6px;">11</span>
  <span class="t" style="left:8.86px;top:401.2px;font-size:20.6px;color:#217346;letter-spacing:1.6px;">12</span>
  <span class="t" style="left:8.81px;top:434.2px;font-size:20.6px;color:#217346;letter-spacing:1.6px;">13</span>
  <span class="t" style="left:45.36px;top:37.4px;font-size:21px;color:#000;font-weight:bold;transform:scaleX(1.057);">Months</span>
  <span class="t" style="left:221.18px;top:37.4px;font-size:21px;color:#000;font-weight:bold;transform:scaleX(0.968);">Earnings</span>
  <span class="t" style="left:433.55px;top:37.4px;font-size:21px;color:#000;font-weight:bold;transform:scaleX(0.914);">UPPERCASE</span>
  <span class="t" style="left:572.11px;top:37.4px;font-size:21px;color:#000;font-weight:bold;transform:scaleX(1.015);">lowercase</span>
  <span class="t" style="left:706.36px;top:37.4px;font-size:21px;color:#000;font-weight:bold;transform:scaleX(0.984);">Proper Case</span>
  <span class="t" style="left:45.63px;top:73.6px;font-size:18px;color:#000;">January</span>
  <span class="t" style="left:261.62px;top:73.6px;font-size:18px;color:#000;transform:scaleX(0.990);">$1, 000</span>
  <span class="t" style="left:433.6px;top:71.6px;font-size:21.3px;color:#000;transform:scaleX(0.934);">JANUARY</span>
  <span class="t" style="left:44.91px;top:106.6px;font-size:18px;color:#000;transform:scaleX(1.036);">February</span>
  <span class="t" style="left:275.72px;top:106.6px;font-size:18px;color:#000;transform:scaleX(0.994);">$900</span>
  <span class="t" style="left:433.48px;top:104.6px;font-size:21.3px;color:#000;transform:scaleX(0.892);">FEBRUARY</span>
  <span class="t" style="left:45.14px;top:139.6px;font-size:18px;color:#000;transform:scaleX(1.084);">March</span>
  <span class="t" style="left:260.52px;top:139.6px;font-size:18px;color:#000;">$1,200</span>
  <span class="t" style="left:433.31px;top:137.6px;font-size:21.3px;color:#000;transform:scaleX(0.992);">MARCH</span>
  <span class="t" style="left:45.9px;top:172.6px;font-size:18px;color:#000;transform:scaleX(1.125);">April</span>
  <span class="t" style="left:260.52px;top:172.6px;font-size:18px;color:#000;">$1,400</span>
  <span class="t" style="left:434.2px;top:170.6px;font-size:21.3px;color:#000;transform:scaleX(0.906);">APRIL</span>
  <span class="t" style="left:45.14px;top:205.6px;font-size:18px;color:#000;transform:scaleX(1.080);">May</span>
  <span class="t" style="left:260.52px;top:205.6px;font-size:18px;color:#000;">$1,050</span>
  <span class="t" style="left:433.2px;top:203.6px;font-size:21.3px;color:#000;transform:scaleX(1.057);">MAY</span>
  <span class="t" style="left:45.64px;top:238.6px;font-size:18px;color:#000;transform:scaleX(0.977);">June</span>
  <span class="t" style="left:275.72px;top:238.6px;font-size:18px;color:#000;transform:scaleX(0.994);">$850</span>
  <span class="t" style="left:433.61px;top:236.6px;font-size:21.3px;color:#000;transform:scaleX(0.919);">JUNE</span>
  <span class="t" style="left:45.64px;top:271.6px;font-size:18px;color:#000;transform:scaleX(0.969);">July</span>
  <span class="t" style="left:260.52px;top:271.6px;font-size:18px;color:#000;">$2,000</span>
  <span class="t" style="left:433.62px;top:269.6px;font-size:21.3px;color:#000;transform:scaleX(0.891);">JULY</span>
  <span class="t" style="left:45.9px;top:304.6px;font-size:18px;color:#000;transform:scaleX(1.031);">August</span>
  <span class="t" style="left:260.52px;top:304.6px;font-size:18px;color:#000;transform:scaleX(1.028);">$2,011</span>
  <span class="t" style="left:434.2px;top:302.6px;font-size:21.3px;color:#000;transform:scaleX(0.919);">AUGUST</span>
  <span class="t" style="left:45.56px;top:337.6px;font-size:18px;color:#000;transform:scaleX(1.032);">September</span>
  <span class="t" style="left:261.62px;top:337.6px;font-size:18px;color:#000;transform:scaleX(0.990);">$1, 000</span>
  <span class="t" style="left:433.33px;top:335.6px;font-size:21.3px;color:#000;transform:scaleX(0.904);">SEPTEMBER</span>
  <span class="t" style="left:45.55px;top:370.6px;font-size:18px;color:#000;transform:scaleX(1.048);">October</span>
  <span class="t" style="left:260.52px;top:370.6px;font-size:18px;color:#000;">$1,050</span>
  <span class="t" style="left:433.32px;top:368.6px;font-size:21.3px;color:#000;transform:scaleX(0.915);">OCTOBER</span>
  <span class="t" style="left:45.18px;top:403.6px;font-size:18px;color:#000;transform:scaleX(1.055);">November</span>
  <span class="t" style="left:260.52px;top:403.6px;font-size:18px;color:#000;">$5,000</span>
  <span class="t" style="left:433.35px;top:401.6px;font-size:21.3px;color:#000;transform:scaleX(0.968);">NOVEMBER</span>
  <span class="t" style="left:45.24px;top:436.6px;font-size:18px;color:#000;transform:scaleX(1.014);">December</span>
  <span class="t" style="left:260.52px;top:436.6px;font-size:18px;color:#000;">$1,400</span>
  <span class="t" style="left:433.41px;top:434.6px;font-size:21.3px;color:#000;transform:scaleX(0.931);">DECEMBER</span>
  <div style="left:1014px;top:2px;width:14.5px;height:15px;background:#fff;border:1px solid #ababab;"></div>
  <div style="left:1014px;top:16px;width:14.5px;height:285px;background:#fff;border:1px solid #ababab;"></div>
  <div style="left:1014px;top:301px;width:14.5px;height:155px;background:#dadada;"></div>
  <div style="left:1014px;top:455px;width:14.5px;height:14.5px;background:#fff;border:1px solid #ababab;"></div>
  <svg style="left:1014px;top:2px" width="14.5" height="15" viewBox="0 0 14.5 15"><path d="M3.6 9.6 L7.3 5.6 L11 9.6 Z" fill="#5e5e5e"/></svg>
  <svg style="left:1014px;top:455px" width="14.5" height="14.5" viewBox="0 0 14.5 14.5"><path d="M3.6 5.4 L7.3 9.4 L11 5.4 Z" fill="#5e5e5e"/></svg>
  <svg style="left:0px;top:0px" width="1032" height="469" viewBox="0 0 1032 469"><g transform="translate(-1 -208)"><path d="M39.8 212.6 V234.8 H17.2 Z" fill="#b8b8b8"/></g></svg>
</div>
<div id="sheetbar" style="left:1px;top:677px;width:1032px;height:28px;background:#e6e6e6;">
  <div style="left:0px;top:0px;width:1032px;height:1px;background:#c6c6c6;"></div>
  <div style="left:100px;top:4px;width:1px;height:19px;background:#a0a0a0;"></div>
  <div style="left:165.5px;top:0px;width:64.5px;height:25px;background:#fff;border-bottom:2px solid #217346;"></div>
  <span class="t" style="left:112.14px;top:7.8px;font-size:12.6px;color:#4a4a4a;transform:scaleX(0.987);">Sheet1</span>
  <span class="t" style="left:176.88px;top:7.8px;font-size:12.6px;color:#217346;font-weight:bold;transform:scaleX(1.006);">Sheet2</span>
  <svg style="left:19px;top:6px" width="50" height="16" viewBox="0 0 50 16"><path d="M12.5 4 L8.5 8 L12.5 12 Z M37.5 4 L41.5 8 L37.5 12 Z" fill="#c3c3c3"/></svg>
  <svg style="left:261px;top:4px" width="20" height="20" viewBox="0 0 20 20"><circle cx="10" cy="9.8" r="7.3" fill="none" stroke="#6a6a6a" stroke-width="1"/><path d="M10 5.8 V13.8 M6 9.8 H14" stroke="#6a6a6a" stroke-width="1.4" fill="none"/></svg>
  <div style="left:637px;top:8px;width:14px;height:13.5px;background:#fff;border:1px solid #ababab;"></div>
  <div style="left:650px;top:8px;width:302px;height:13.5px;background:#fff;border:1px solid #ababab;"></div>
  <div style="left:952px;top:8px;width:44px;height:13.5px;background:#d0d0d0;"></div>
  <div style="left:996px;top:8px;width:14.5px;height:13.5px;background:#fff;border:1px solid #ababab;"></div>
  <svg style="left:637px;top:8px" width="14" height="13.5" viewBox="0 0 14 13.5"><path d="M9 3.2 L5 6.8 L9 10.4 Z" fill="#5e5e5e"/></svg>
  <svg style="left:996px;top:8px" width="14.5" height="13.5" viewBox="0 0 14.5 13.5"><path d="M5.6 3.2 L9.6 6.8 L5.6 10.4 Z" fill="#5e5e5e"/></svg>
  <svg style="left:617px;top:9px" width="4" height="12" viewBox="0 0 4 12"><circle cx="2" cy="1.5" r="0.9" fill="#9a9a9a"/><circle cx="2" cy="6" r="0.9" fill="#9a9a9a"/><circle cx="2" cy="10.5" r="0.9" fill="#9a9a9a"/></svg>
</div>
<div id="statusbar" style="left:1px;top:705px;width:1032px;height:21px;background:#f3f2f1;">
  <div style="left:0px;top:0px;width:1032px;height:1px;background:#e1dfdd;"></div>
  <span class="t" style="left:7.85px;top:6.5px;font-size:11.5px;color:#4a4a4a;transform:scaleX(0.928);">Ready</span>
  <span class="t" style="left:54.1px;top:6.8px;font-size:11.5px;color:#4a4a4a;transform:scaleX(1.018);">Workbook Statistics</span>
  <span class="t" style="left:195.3px;top:6.5px;font-size:11.5px;color:#4a4a4a;transform:scaleX(0.982);">Accessibility: Investigate</span>
  <span class="t" style="left:653.02px;top:6.3px;font-size:11.5px;color:#4a4a4a;transform:scaleX(1.007);">Count: 12</span>
  <span class="t" style="left:986.18px;top:6.3px;font-size:11.5px;color:#4a4a4a;transform:scaleX(0.951);">166%</span>
  <div style="left:721.5px;top:1px;width:39px;height:20px;background:#c8c6c4;"></div>
  <div style="left:860px;top:10.5px;width:99px;height:1px;background:#6a6a6a;"></div>
  <div style="left:909.5px;top:7px;width:1px;height:8px;background:#6a6a6a;"></div>
  <div style="left:918px;top:5.5px;width:4.5px;height:11px;background:#6a6a6a;"></div>
  <div style="left:846px;top:10.5px;width:8px;height:1px;background:#555;"></div>
  <div style="left:964.5px;top:10.5px;width:8px;height:1px;background:#555;"></div>
  <div style="left:968px;top:7px;width:1px;height:8px;background:#555;"></div>
  <svg style="left:0px;top:0px" width="1032" height="21" viewBox="0 0 1032 21"><g transform="translate(-1 -705)"><g fill="none" stroke="#444" stroke-width="1.2">
<path d="M735.8 710.2 H747.4 V721.4 H735.8 Z M739.7 710.2 V721.4 M743.5 710.2 V721.4 M735.8 713.9 H747.4 M735.8 717.7 H747.4"/>
<path d="M775.8 710.2 H788.2 V721.4 H775.8 Z M778.4 712.6 H785.6 V719 H778.4 Z M780 714.6 H784 M780 716.8 H784" stroke-width="1.1"/>
<path d="M815.9 710.2 H828.2 V721.4 H815.9 Z M819.8 710.2 V716.4 H824.4 V710.2 M815.9 716.4 H819.8" stroke-width="1.1"/>
</g>
<g fill="none" stroke="#444" stroke-width="1">
<circle cx="184.4" cy="711" r="1.5"/>
<path d="M178.4 713.6 C181 714.6 187.6 714.6 190.4 713.6 M182.4 714.4 C182.6 717.4 181.4 720 180 722.4 M186.4 714.4 C186.4 716 186.8 717 187.4 718 M184.4 717.6 L182.8 721"/>
<path d="M185.6 718.4 L190.6 723 M190.6 718.4 L185.6 723" stroke-width="1.1"/>
</g></g></svg>
</div>
<div id="frame" style="left:0px;top:0px;width:1034px;height:728px;pointer-events:none;">
  <div style="left:1px;top:34.6px;width:1031.5px;height:1.2px;background:#fbfbfb;"></div>
  <div style="left:1px;top:35px;width:1px;height:126px;background:#fbfbfb;"></div>
  <div style="left:0px;top:35px;width:1px;height:693px;background:#217346;"></div>
  <div style="left:1032.5px;top:35px;width:1.5px;height:693px;background:#217346;"></div>
  <div style="left:0px;top:726px;width:1034px;height:2px;background:#217346;"></div>
</div>
<div id="menu" style="left:52px;top:117px;width:154px;height:58px;background:#fff;box-shadow:0 1px 4px rgba(0,0,0,.35);">
  <span class="t" style="left:38.14px;top:36.8px;font-size:12.6px;color:#333;transform:scaleX(0.892);">Copy as</span>
  <span class="t" style="left:82.03px;top:36.8px;font-size:12.6px;color:#333;transform:scaleX(0.964);"><span class="u">P</span>icture...</span>
  <svg style="left:77.5px;top:26.6px" width="14" height="22" viewBox="0 0 14 22"><path d="M1 .8 V17.4 L4.9 13.7 L7.7 20 L10.1 18.9 L7.4 12.8 H12.6 Z" fill="#fff" stroke="#111" stroke-width="1"/></svg>
  <div style="left:0px;top:-1px;width:154.5px;height:32px;background:#c9c7c6;border:3px solid #000;border-radius:6px;"></div>
  <span class="t" style="left:38.1px;top:9.8px;font-size:12.6px;color:#333;transform:scaleX(0.945);"><span class="u">C</span>opy</span>
  <svg style="left:0px;top:0px" width="154" height="58" viewBox="0 0 154 58"><g transform="translate(-52 -117)"><g stroke="#333" stroke-width="1.2" fill="#fff">
<path d="M65.4 123.4 H72.4 L74.6 125.6 V135.8 H65.4 Z"/>
<path d="M71.2 126.4 H77.4 L80.6 129.6 V138.4 H71.2 Z"/>
<path d="M77.2 126.6 V129.8 H80.4" fill="none"/>
<path d="M73.4 132.4 H78.4 M73.4 134.9 H78.4" fill="none" stroke-width="1"/>
</g></g></svg>
</div>
<div id="notes" style="left:0px;top:0px;width:1034px;height:728px;pointer-events:none;">
  <div style="left:58px;top:36px;width:58px;height:27.6px;border:3px solid #000;border-radius:6px;"></div>
  <span class="t" style="left:48.31px;top:203px;font-size:15.5px;color:#000;font-family:'DejaVu Sans', 'Liberation Sans', sans-serif;font-weight:bold;transform:scaleX(0.990);">Copy option</span>
  <span class="t" style="left:810.14px;top:433.6px;font-size:24.5px;color:#000;font-family:'DejaVu Sans', 'Liberation Sans', sans-serif;font-weight:bold;transform:scaleX(1.051);">Copy</span>
  <span class="t" style="left:784.38px;top:471px;font-size:24.5px;color:#000;font-family:'DejaVu Sans', 'Liberation Sans', sans-serif;font-weight:bold;transform:scaleX(0.969);">(Ctrl + C)</span>
  <span class="t" style="left:662.59px;top:618.5px;font-size:21px;color:#000;font-family:'DejaVu Sans', 'Liberation Sans', sans-serif;font-weight:bold;transform:scaleX(1.012);">Uppercase selected</span>
  <svg style="left:0px;top:0px" width="1034" height="728" viewBox="0 0 1034 728">
<g fill="none" stroke="#000" stroke-width="3" stroke-linecap="butt">
<path d="M802.3 435.1 L216 137.4"/>
<path d="M658.5 629.9 L583 591.5" stroke-width="2.6"/>
<path d="M51.8 198.6 C44 176 24 136 23.6 119 C23.6 108.5 32 106.4 45 106.4" stroke-width="2.8"/>
</g>
<path d="M206.1 132.4 L223.3 134.1 L217.9 138.7 L218.3 144.6 Z" fill="#000"/>
<path d="M573.9 585 L592.4 587.4 L586.8 592.6 L585 598.6 Z" fill="#000"/>
<path d="M56.8 106.2 L39.4 100.6 L44.6 106.4 L39.6 111.8 Z" fill="#000"/>
</svg>
</div>
</div>
</body>
</html>
